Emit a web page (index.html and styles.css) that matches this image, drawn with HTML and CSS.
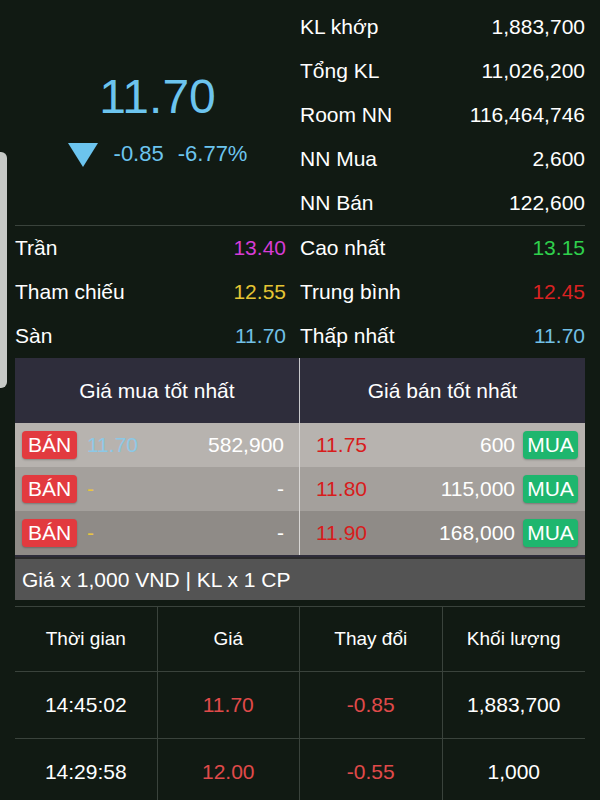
FILE: index.html
```html
<!DOCTYPE html>
<html>
	<head>
		<meta charset="UTF-8">
		<title>Chi tiết mã</title>
		<link rel="stylesheet" href="styles.css">
	</head>
	<body>
		<div class="handle"></div>
		<div class="page">
			<div class="summary">
				<div class="lastprice">
					<div class="bigprice">11.70</div>
					<div class="change">
						<svg class="arrow" width="30" height="24" viewBox="0 0 30 24"><polygon points="0,0 30,0 15,24" fill="#6cc4ee"/></svg>
						<span>-0.85</span>
						<span>-6.77%</span>
					</div>
				</div>
				<div class="info">
					<div class="inforow"><span>KL khớp</span><span>1,883,700</span></div>
					<div class="inforow"><span>Tổng KL</span><span>11,026,200</span></div>
					<div class="inforow"><span>Room NN</span><span>116,464,746</span></div>
					<div class="inforow"><span>NN Mua</span><span>2,600</span></div>
					<div class="inforow"><span>NN Bán</span><span>122,600</span></div>
				</div>
			</div>
			<div class="stats">
				<div class="statrow left"><span>Trần</span><span class="purple">13.40</span></div>
				<div class="statrow"><span>Cao nhất</span><span class="green">13.15</span></div>
				<div class="statrow left"><span>Tham chiếu</span><span class="yellow">12.55</span></div>
				<div class="statrow"><span>Trung bình</span><span class="red">12.45</span></div>
				<div class="statrow left"><span>Sàn</span><span class="blue">11.70</span></div>
				<div class="statrow"><span>Thấp nhất</span><span class="blue">11.70</span></div>
			</div>
			<div class="book">
				<div class="bookhead">
					<div>Giá mua tốt nhất</div>
					<div>Giá bán tốt nhất</div>
				</div>
				<div class="bookrow r1">
					<div class="bid"><span class="badge sell">BÁN</span><span class="bprice pale">11.70</span><span class="vol">582,900</span></div>
					<div class="ask"><span class="aprice">11.75</span><span class="vol">600</span><span class="badge buy">MUA</span></div>
				</div>
				<div class="bookrow r2">
					<div class="bid"><span class="badge sell">BÁN</span><span class="bprice dash">-</span><span class="vol">-</span></div>
					<div class="ask"><span class="aprice">11.80</span><span class="vol">115,000</span><span class="badge buy">MUA</span></div>
				</div>
				<div class="bookrow r3">
					<div class="bid"><span class="badge sell">BÁN</span><span class="bprice dash">-</span><span class="vol">-</span></div>
					<div class="ask"><span class="aprice">11.90</span><span class="vol">168,000</span><span class="badge buy">MUA</span></div>
				</div>
				<div class="bookfoot">Giá x 1,000 VND | KL x 1 CP</div>
			</div>
			<div class="trades">
				<div class="cell head">Thời gian</div>
				<div class="cell head">Giá</div>
				<div class="cell head">Thay đổi</div>
				<div class="cell head">Khối lượng</div>
				<div class="cell">14:45:02</div>
				<div class="cell down">11.70</div>
				<div class="cell down">-0.85</div>
				<div class="cell">1,883,700</div>
				<div class="cell">14:29:58</div>
				<div class="cell down">12.00</div>
				<div class="cell down">-0.55</div>
				<div class="cell">1,000</div>
			</div>
		</div>
	</body>
</html>
```

FILE: styles.css
```css
* {
	margin: 0;
	padding: 0;
	box-sizing: border-box;
}
body {
	background-color: #111a13;
	color: #fff;
	font-family: "Liberation Sans", Arial, sans-serif;
	font-size: 21px;
	overflow: hidden;
}
.handle {
	position: absolute;
	left: 0;
	top: 152px;
	width: 7px;
	height: 236px;
	background-color: #c6c9c6;
	border-radius: 0 6px 6px 0;
}
.page {
	padding: 0 15px;
}
.summary {
	display: grid;
	grid-template-columns: 285px 285px;
	border-bottom: 1px solid #3a433c;
}
.lastprice {
	display: flex;
	flex-direction: column;
	align-items: center;
	padding-top: 69px;
	color: #6cc4ee;
}
.bigprice {
	font-size: 48px;
	line-height: 56px;
}
.change {
	display: flex;
	align-items: center;
	margin-top: 16px;
	font-size: 22px;
}
.change span {
	margin-left: 14px;
}
.change .arrow {
	margin-right: 2px;
	margin-top: 2px;
}
.info {
	padding-top: 5px;
}
.inforow {
	display: flex;
	justify-content: space-between;
	align-items: center;
	height: 44px;
}
.stats {
	display: grid;
	grid-template-columns: 285px 285px;
}
.statrow {
	display: flex;
	justify-content: space-between;
	align-items: center;
	height: 44px;
}
.statrow.left {
	padding-right: 14px;
}
.purple {
	color: #d63cd6;
}
.green {
	color: #2fd04c;
}
.yellow {
	color: #e6c534;
}
.red {
	color: #d92222;
}
.blue {
	color: #72c0e6;
}
.book {
	background-color: #2e2d3b;
}
.bookhead {
	display: grid;
	grid-template-columns: 285px 285px;
	height: 65px;
}
.bookhead div {
	display: flex;
	align-items: center;
	justify-content: center;
}
.bookhead div:first-child {
	border-right: 1px solid #c9c9cc;
}
.bookrow {
	display: grid;
	grid-template-columns: 285px 285px;
	height: 44px;
}
.r1 {
	background-color: #b7b3af;
}
.r2 {
	background-color: #a4a09c;
}
.r3 {
	background-color: #8f8b87;
}
.bid,
.ask {
	display: flex;
	align-items: center;
}
.bid {
	padding: 0 15px 0 7px;
	border-right: 1px solid #d8d6d4;
}
.ask {
	padding: 0 7px 0 16px;
}
.badge {
	display: inline-block;
	width: 55px;
	height: 28px;
	line-height: 28px;
	text-align: center;
	border-radius: 4px;
	color: #fff;
	box-shadow: 0 1px 2px rgba(0, 0, 0, 0.25);
}
.sell {
	background-color: #e23a3f;
}
.buy {
	background-color: #1eb66e;
}
.bprice {
	margin-left: 10px;
}
.pale {
	color: #8cc8e6;
}
.dash {
	color: #e8c440;
}
.vol {
	margin-left: auto;
	color: #fff;
}
.ask .vol {
	margin-right: 8px;
}
.aprice {
	color: #d81c1c;
}
.bookfoot {
	margin-top: 2px;
	height: 43px;
	line-height: 41px;
	padding-left: 7px;
	background-color: #545454;
	border-top: 2px solid #2b2b2b;
}
.trades {
	display: grid;
	grid-template-columns: repeat(4, 1fr);
	grid-template-rows: 65px 67px 67px;
	margin-top: 6px;
	border-top: 1px solid #3a433c;
}
.cell {
	display: flex;
	align-items: center;
	justify-content: center;
	border-bottom: 1px solid #3a433c;
	border-right: 1px solid #3a433c;
}
.cell:nth-child(4n) {
	border-right: none;
}
.head {
	font-size: 19px;
}
.down {
	color: #e04a4a;
}
```
